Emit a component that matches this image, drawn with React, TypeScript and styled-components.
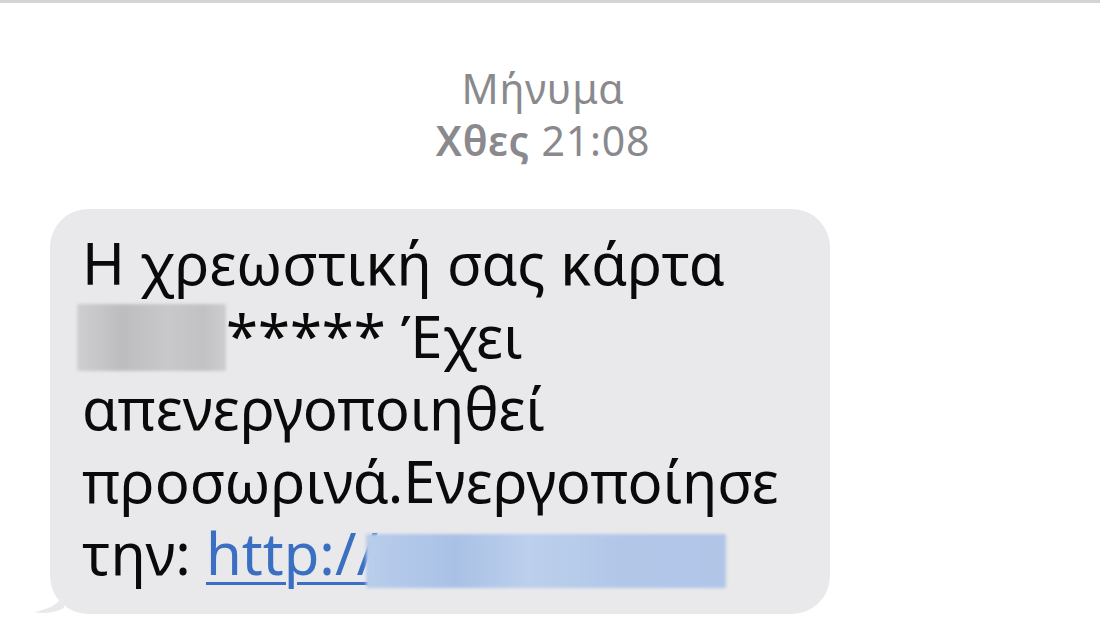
import React from "react";
import styled, { createGlobalStyle } from "styled-components";

const GlobalStyle = createGlobalStyle`
  html, body {
    margin: 0;
    padding: 0;
    background: #ffffff;
  }
  body {
    font-family: "Noto Sans", "Liberation Sans", sans-serif;
    -webkit-font-smoothing: antialiased;
  }
`;

const Screen = styled.div`
  width: 1100px;
  height: 619px;
  overflow: hidden;
  border-top: 3px solid #d4d4d6;
  box-sizing: border-box;
  display: flex;
  flex-direction: column;
`;

const Header = styled.div`
  display: flex;
  flex-direction: column;
  align-items: center;
  padding-top: 59px;
  padding-right: 14px;
  color: #8a8a8e;
  font-size: 41px;
  letter-spacing: 0.8px;
  line-height: 52px;
`;

const Stamp = styled.div`
  b {
    font-weight: 600;
  }
`;

const Thread = styled.div`
  padding: 43px 0 0 50px;
`;

type BubbleProps = { $width: number };

const Bubble = styled.div<BubbleProps>`
  position: relative;
  width: ${(p) => p.$width}px;
  box-sizing: border-box;
  background: #e9e9eb;
  border-radius: 38px;
  padding: 18px 20px 24px 32px;
  color: #0a0a0a;
  font-size: 58px;
  line-height: 72.5px;
`;

const Tail = styled.svg`
  position: absolute;
  left: -16px;
  bottom: 0;
`;

const Line = styled.div`
  white-space: nowrap;
`;

type RedactProps = { $w: number; $h: number; $top: number; $left: number; $tone: "gray" | "blue" };

const Redact = styled.span<RedactProps>`
  display: inline-block;
  width: ${(p) => p.$w}px;
  height: ${(p) => p.$h}px;
  margin-top: ${(p) => p.$top}px;
  margin-left: ${(p) => p.$left}px;
  vertical-align: top;
  border-radius: 2px;
  background: ${(p) =>
    p.$tone === "gray"
      ? "linear-gradient(90deg, #cfcfd1 0%, #bdbdbf 30%, #c8c8ca 60%, #c2c2c4 85%, #cdcdcf 100%)"
      : "linear-gradient(90deg, #b9cdeb 0%, #a9c1e6 25%, #bccfec 45%, #b2c7e8 70%, #b0c5e7 100%)"};
  filter: blur(1.5px);
`;

const Link = styled.span`
  color: #3b6fc2;
  text-decoration: underline;
  text-decoration-thickness: 3px;
  text-underline-offset: 7px;
`;

export default function App() {
  return (
    <>
      <GlobalStyle />
      <Screen>
        <Header>
          <div>Μήνυμα</div>
          <Stamp>
            <b>Χθες</b> 21:08
          </Stamp>
        </Header>
        <Thread>
          <Bubble $width={780}>
            <Line>Η χρεωστική σας κάρτα</Line>
            <Line>
              <Redact $w={149} $h={67} $top={4} $left={-5} $tone="gray" />
              ***** Έχει
            </Line>
            <Line>απενεργοποιηθεί</Line>
            <Line>προσωρινά.Ενεργοποίησε</Line>
            <Line>
              την: <Link>http://</Link>
              <Redact $w={360} $h={54} $top={17} $left={-12} $tone="blue" />
            </Line>
            <Tail width="30" height="24" viewBox="0 0 30 24">
              <path d="M30 0 C28 10 22 18 0 22 C10 24 20 23 30 18 Z" fill="#e9e9eb" />
            </Tail>
          </Bubble>
        </Thread>
      </Screen>
    </>
  );
}
